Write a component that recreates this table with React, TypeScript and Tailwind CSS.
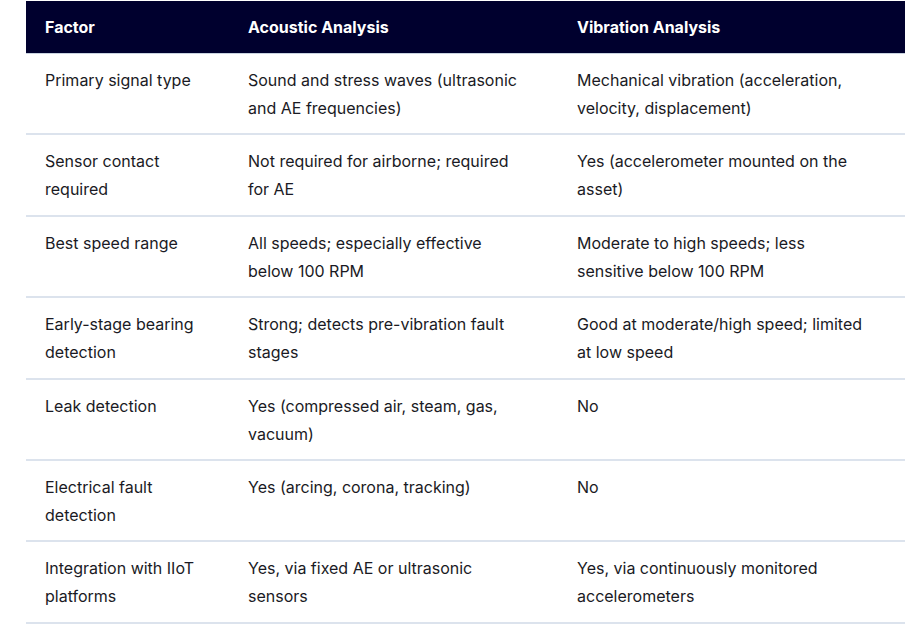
import React from "react";

const rows: [string, string, string][] = [
  ["Primary signal type", "Sound and stress waves (ultrasonic and AE frequencies)", "Mechanical vibration (acceleration, velocity, displacement)"],
  ["Sensor contact required", "Not required for airborne; required for AE", "Yes (accelerometer mounted on the asset)"],
  ["Best speed range", "All speeds; especially effective below 100 RPM", "Moderate to high speeds; less sensitive below 100 RPM"],
  ["Early-stage bearing detection", "Strong; detects pre-vibration fault stages", "Good at moderate/high speed; limited at low speed"],
  ["Leak detection", "Yes (compressed air, steam, gas, vacuum)", "No"],
  ["Electrical fault detection", "Yes (arcing, corona, tracking)", "No"],
  ["Integration with IIoT platforms", "Yes, via fixed AE or ultrasonic sensors", "Yes, via continuously monitored accelerometers"],
];

export default function App() {
  return (
    <div className="w-[920px] h-[629px] bg-white pt-px pl-[26px] overflow-hidden" style={{ fontFamily: "Inter, 'Liberation Sans', sans-serif" }}>
      <table className="w-[879px] border-collapse table-fixed text-[16px] leading-[28px] text-[#1a1a24]">
        <colgroup>
          <col className="w-[203px]" />
          <col className="w-[329px]" />
          <col className="w-[347px]" />
        </colgroup>
        <thead>
          <tr className="bg-[#00002e] text-white">
            <th className="text-left font-bold pl-[19px] pr-8 py-3 border-b border-[#c9d3e0]">Factor</th>
            <th className="text-left font-bold pl-[19px] pr-8 py-3 border-b border-[#c9d3e0]">Acoustic Analysis</th>
            <th className="text-left font-bold pl-[19px] pr-8 py-3 border-b border-[#c9d3e0]">Vibration Analysis</th>
          </tr>
        </thead>
        <tbody>
          {rows.map((r, i) => (
            <tr key={i} className="border-b-2 border-[#dce3ed] align-top">
              {r.map((c, j) => (
                <td key={j} className="pl-[19px] pr-8 pt-3 pb-[11.4px]">{c}</td>
              ))}
            </tr>
          ))}
        </tbody>
      </table>
    </div>
  );
}
